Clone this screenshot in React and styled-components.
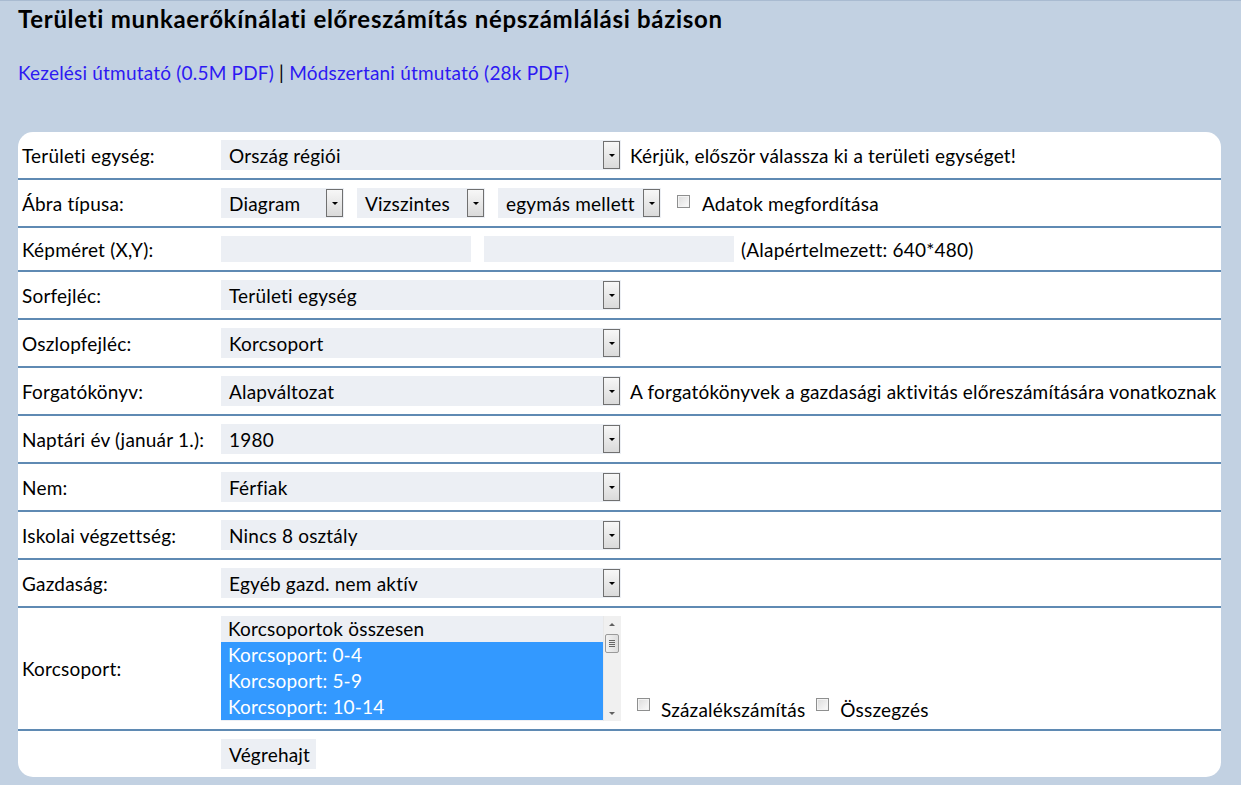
import React from 'react';
import styled, { createGlobalStyle } from 'styled-components';

const Global = createGlobalStyle`
  html, body {
    margin: 0;
    padding: 0;
    background: #c2d1e2;
  }
  body {
    font-family: Lato, "Open Sans", sans-serif;
    font-size: 19px;
    letter-spacing: 0.2px;
    color: #000;
  }
`;

const Page = styled.div`
  border-top: 1px solid #a9bbd1;
  padding: 0 20px 9px 18px;
  min-height: 775px;
  box-sizing: border-box;
`;

const Title = styled.h1`
  margin: 0;
  padding-top: 3px;
  font-size: 24px;
  letter-spacing: 0.7px;
  line-height: 30px;
  font-weight: 700;
`;

const Links = styled.div`
  margin-top: 27px;
  line-height: 24px;
  color: #000;
  a {
    color: #2d19f2;
    text-decoration: none;
  }
`;

const Card = styled.div`
  margin-top: 47px;
  background: #fff;
  border-radius: 15px;
  overflow: hidden;
`;

const Row = styled.div`
  display: grid;
  grid-template-columns: 203px 1fr;
  align-items: center;
  padding: 8px 0;
  border-bottom: ${({ last }) => (last ? 'none' : '2px solid #5f8ab3')};
`;

const Label = styled.div`
  padding-left: 4px;
  white-space: nowrap;
`;

const Field = styled.div`
  display: flex;
  align-items: ${({ bottom }) => (bottom ? 'flex-end' : 'center')};
  gap: ${({ gap }) => gap || 13}px;
  white-space: nowrap;
`;

const SelectBox = styled.div`
  position: relative;
  width: ${({ w }) => w}px;
  height: 30px;
  background: #eceff4;
  box-sizing: border-box;
  padding-left: 8px;
  display: flex;
  align-items: center;
  flex: none;
`;

const ArrowBtn = styled.span`
  position: absolute;
  right: 1px;
  top: 1px;
  bottom: 1px;
  width: 17px;
  box-sizing: border-box;
  border: 1px solid #707070;
  background: linear-gradient(#f7f7f7, #dadada);
  display: flex;
  align-items: center;
  justify-content: center;
  &::after {
    content: '';
    border-left: 3px solid transparent;
    border-right: 3px solid transparent;
    border-top: 3px solid #000;
  }
`;

const Select = ({ w, children }) => (
  <SelectBox w={w}>
    {children}
    <ArrowBtn />
  </SelectBox>
);

const TextInput = styled.div`
  width: 250px;
  height: 26px;
  background: #eceff4;
  flex: none;
  margin-right: ${({ mr }) => mr || 0}px;
`;

const Check = styled.span`
  display: inline-block;
  width: 13px;
  height: 13px;
  box-sizing: border-box;
  border: 1px solid #8e8f8f;
  background: linear-gradient(135deg, #dcdcdc, #fbfbfb);
  box-shadow: inset 0 0 0 1px #f4f4f4;
  flex: none;
  margin-top: 3px;
`;

const CheckGroup = styled.span`
  display: flex;
  align-items: flex-start;
  gap: ${({ gap }) => gap || 12}px;
  margin-left: ${({ ml }) => ml || 0}px;
`;

const CheckLabel = styled.span`
  margin-top: ${({ mt }) => mt || 0}px;
`;

const ListBox = styled.div`
  position: relative;
  width: 400px;
  height: 105px;
  background: #eceff4;
  flex: none;
  overflow: hidden;
`;

const Option = styled.div`
  height: 26px;
  line-height: 26px;
  padding-left: 7px;
  width: 382px;
  box-sizing: border-box;
  background: ${({ selected }) => (selected ? '#3399ff' : 'transparent')};
  color: ${({ selected }) => (selected ? '#fff' : '#000')};
`;

const Scrollbar = styled.div`
  position: absolute;
  right: 0;
  top: 0;
  bottom: 0;
  width: 17px;
  background: #f0f0f0;
  border-left: 1px solid #e8e8e8;
`;

const ScrollArrow = styled.span`
  position: absolute;
  left: 5px;
  ${({ down }) => (down ? 'bottom: 6px;' : 'top: 7px;')}
  border-left: 3px solid transparent;
  border-right: 3px solid transparent;
  ${({ down }) => (down ? 'border-top: 3px solid #606060;' : 'border-bottom: 3px solid #606060;')}
`;

const Thumb = styled.span`
  position: absolute;
  left: 1px;
  top: 18px;
  width: 14px;
  height: 19px;
  box-sizing: border-box;
  border: 1px solid #9a9a9a;
  border-radius: 2px;
  background: linear-gradient(90deg, #f2f2f2, #dedede);
  &::after {
    content: '';
    position: absolute;
    left: 3px;
    top: 5px;
    width: 6px;
    height: 7px;
    background: repeating-linear-gradient(#666 0 1px, transparent 1px 2px);
  }
`;

const Button = styled.div`
  display: inline-flex;
  align-items: center;
  height: 30px;
  padding: 0 6px 0 8px;
  background: #eceff4;
  width: max-content;
`;

export default function App() {
  return (
    <>
      <Global />
      <Page>
        <Title>Területi munkaerőkínálati előreszámítás népszámlálási bázison</Title>
        <Links>
          <a href="#">Kezelési útmutató (0.5M PDF)</a> | <a href="#">Módszertani útmutató (28k PDF)</a>
        </Links>
        <Card>
          <Row>
            <Label>Területi egység:</Label>
            <Field gap={9}>
              <Select w={400}>Ország régiói</Select>
              <span>Kérjük, először válassza ki a területi egységet!</span>
            </Field>
          </Row>
          <Row>
            <Label>Ábra típusa:</Label>
            <Field>
              <Select w={123}>Diagram</Select>
              <Select w={128}>Vizszintes</Select>
              <Select w={163}>egymás mellett</Select>
              <CheckGroup ml={3}>
                <Check />
                <CheckLabel mt={0}>Adatok megfordítása</CheckLabel>
              </CheckGroup>
            </Field>
          </Row>
          <Row>
            <Label>Képméret (X,Y):</Label>
            <Field>
              <TextInput />
              <TextInput mr={-6} />
              <span>(Alapértelmezett: 640*480)</span>
            </Field>
          </Row>
          <Row>
            <Label>Sorfejléc:</Label>
            <Field>
              <Select w={400}>Területi egység</Select>
            </Field>
          </Row>
          <Row>
            <Label>Oszlopfejléc:</Label>
            <Field>
              <Select w={400}>Korcsoport</Select>
            </Field>
          </Row>
          <Row>
            <Label>Forgatókönyv:</Label>
            <Field gap={9}>
              <Select w={400}>Alapváltozat</Select>
              <span>A forgatókönyvek a gazdasági aktivitás előreszámítására vonatkoznak</span>
            </Field>
          </Row>
          <Row>
            <Label>Naptári év (január 1.):</Label>
            <Field>
              <Select w={400}>1980</Select>
            </Field>
          </Row>
          <Row>
            <Label>Nem:</Label>
            <Field>
              <Select w={400}>Férfiak</Select>
            </Field>
          </Row>
          <Row>
            <Label>Iskolai végzettség:</Label>
            <Field>
              <Select w={400}>Nincs 8 osztály</Select>
            </Field>
          </Row>
          <Row>
            <Label>Gazdaság:</Label>
            <Field>
              <Select w={400}>Egyéb gazd. nem aktív</Select>
            </Field>
          </Row>
          <Row>
            <Label>Korcsoport:</Label>
            <Field bottom gap={16}>
              <ListBox>
                <Option>Korcsoportok összesen</Option>
                <Option selected>Korcsoport: 0-4</Option>
                <Option selected>Korcsoport: 5-9</Option>
                <Option selected>Korcsoport: 10-14</Option>
                <Scrollbar>
                  <ScrollArrow />
                  <Thumb />
                  <ScrollArrow down />
                </Scrollbar>
              </ListBox>
              <CheckGroup gap={11}>
                <Check />
                <CheckLabel mt={3}>Százalékszámítás</CheckLabel>
              </CheckGroup>
              <CheckGroup ml={-5} gap={11}>
                <Check />
                <CheckLabel mt={3}>Összegzés</CheckLabel>
              </CheckGroup>
            </Field>
          </Row>
          <Row last>
            <Label />
            <Field>
              <Button>Végrehajt</Button>
            </Field>
          </Row>
        </Card>
      </Page>
    </>
  );
}
